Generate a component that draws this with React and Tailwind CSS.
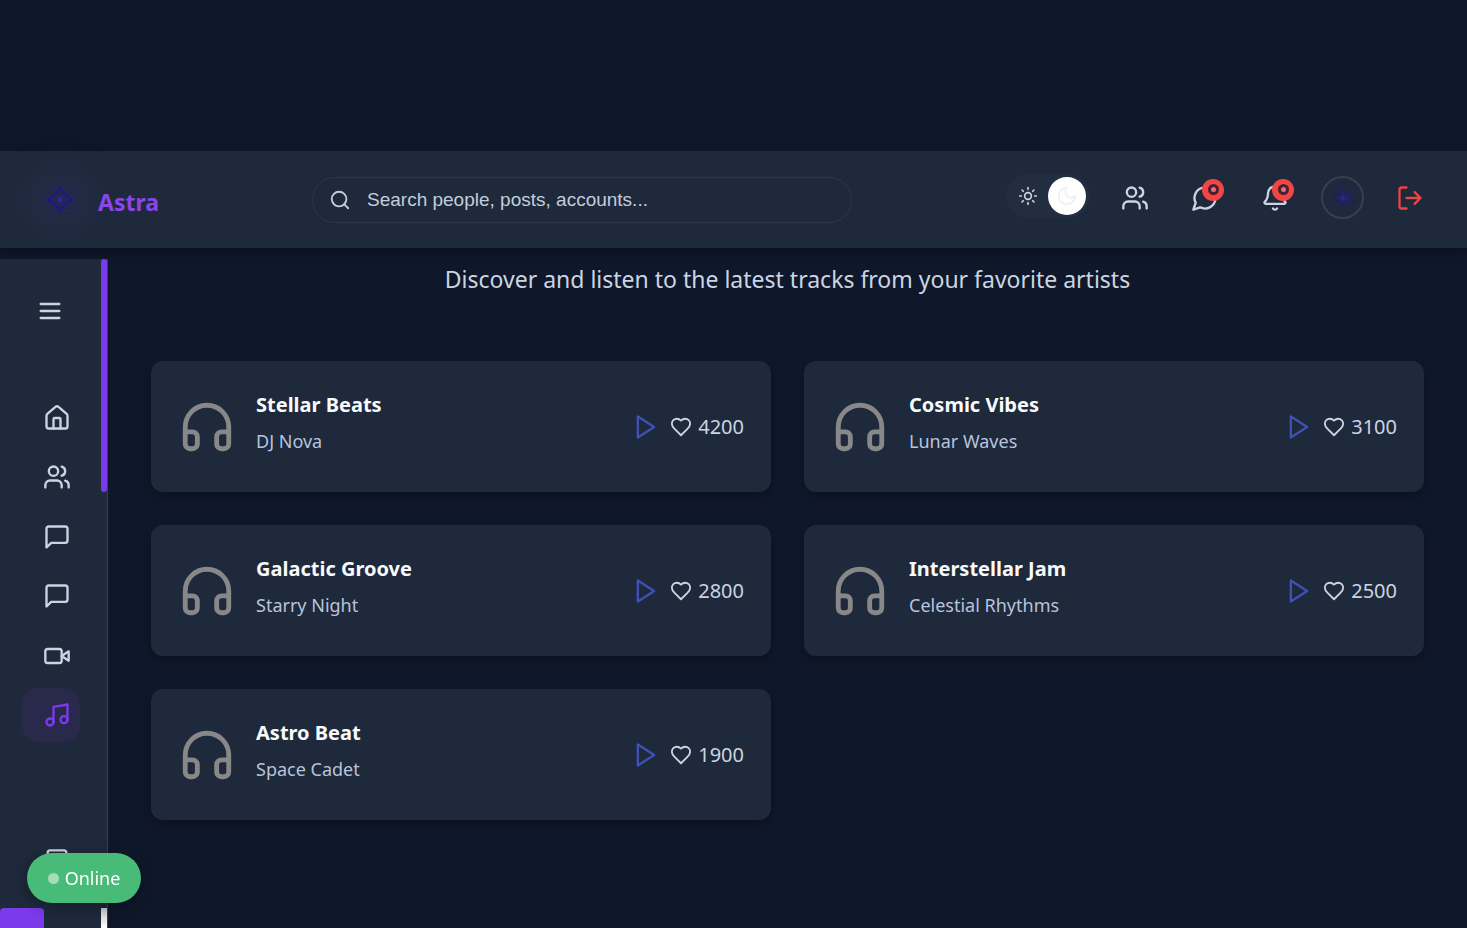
const stroke = {
  fill: 'none',
  stroke: 'currentColor',
  strokeWidth: 2,
  strokeLinecap: 'round',
  strokeLinejoin: 'round',
  viewBox: '0 0 24 24',
  'aria-hidden': true,
};

const paths = {
  menu: <path d="M4 6h16M4 12h16M4 18h16" />,
  home: (
    <>
      <path d="M15 21v-8a1 1 0 0 0-1-1h-4a1 1 0 0 0-1 1v8" />
      <path d="M3 10a2 2 0 0 1 .709-1.528l7-5.999a2 2 0 0 1 2.582 0l7 5.999A2 2 0 0 1 21 10v9a2 2 0 0 1-2 2H5a2 2 0 0 1-2-2z" />
    </>
  ),
  users: (
    <>
      <path d="M16 21v-2a4 4 0 0 0-4-4H6a4 4 0 0 0-4 4v2" />
      <circle cx="9" cy="7" r="4" />
      <path d="M22 21v-2a4 4 0 0 0-3-3.87M16 3.13a4 4 0 0 1 0 7.75" />
    </>
  ),
  message: <path d="M21 15a2 2 0 0 1-2 2H7l-4 4V5a2 2 0 0 1 2-2h14a2 2 0 0 1 2 2z" />,
  video: (
    <>
      <path d="m22 8-6 4 6 4V8Z" />
      <rect x="2" y="6" width="14" height="12" rx="2" />
    </>
  ),
  music: (
    <>
      <path d="M9 18V5l12-2v13" />
      <circle cx="6" cy="18" r="3" />
      <circle cx="18" cy="16" r="3" />
    </>
  ),
  file: <rect x="4" y="2" width="16" height="20" rx="2" />,
  headphones: (
    <path d="M3 14h3a2 2 0 0 1 2 2v3a2 2 0 0 1-2 2H5a2 2 0 0 1-2-2v-7a9 9 0 0 1 18 0v7a2 2 0 0 1-2 2h-1a2 2 0 0 1-2-2v-3a2 2 0 0 1 2-2h3" />
  ),
  play: <path d="m5 3 14 9-14 9z" />,
  heart: (
    <path d="M19 14c1.49-1.46 3-3.21 3-5.5A5.5 5.5 0 0 0 16.5 3c-1.76 0-3 .5-4.5 2-1.5-1.5-2.74-2-4.5-2A5.5 5.5 0 0 0 2 8.5c0 2.3 1.5 4.05 3 5.5l7 7Z" />
  ),
  chat: <path d="M7.9 20A9 9 0 1 0 4 16.1L2 22Z" />,
  bell: (
    <>
      <path d="M10.268 21a2 2 0 0 0 3.464 0" />
      <path d="M3.262 15.326A1 1 0 0 0 4 17h16a1 1 0 0 0 .74-1.673C19.41 13.956 18 12.499 18 8A6 6 0 0 0 6 8c0 4.499-1.411 5.956-2.738 7.326" />
    </>
  ),
  logout: (
    <path d="M9 21H5a2 2 0 0 1-2-2V5a2 2 0 0 1 2-2h4M16 17l5-5-5-5M21 12H9" />
  ),
  search: (
    <>
      <circle cx="11" cy="11" r="8" />
      <path d="m21 21-4.3-4.3" />
    </>
  ),
  sun: (
    <>
      <circle cx="12" cy="12" r="4" />
      <path d="M12 2v2M12 20v2m-7.07-17.07 1.41 1.41m11.32 11.32 1.41 1.41M2 12h2m16 0h2M6.34 17.66l-1.41 1.41M19.07 4.93l-1.41 1.41" />
    </>
  ),
  moon: <path d="M12 3a6 6 0 0 0 9 9 9 9 0 1 1-9-9Z" />,
};

function Icon({ name, className }) {
  return (
    <svg {...stroke} className={className}>
      {paths[name]}
    </svg>
  );
}

function Logo({ className }) {
  return (
    <svg viewBox="0 0 40 40" fill="none" className={className} aria-hidden="true">
      <g stroke="#1f1f5c" strokeWidth="0.8" opacity="0.6">
        <path d="M9 14V6h4V3M14 9V3h5M26 10V4h4V2M31 13V6h5M36 10v15l-4 4H24M1 32h8l8-8M1 28h6l6-6M12 34l6-6M25 33h7l3-3M22 7V2" />
      </g>
      <path
        d="M20 8c2.500 5 6.500 9 13 12-6.500 3-10.500 6-13 11-2.500-5-6.500-8-13-11 6.500-3 10.500-7 13-12Z"
        fill="#22294f"
        stroke="#22187c"
        strokeWidth="2.6"
        strokeLinejoin="round"
      />
      <path d="M20 16.500 23 20l-3 3-3-3Z" fill="#2d22a8" />
    </svg>
  );
}

function Badge() {
  return (
    <span className="absolute -right-[5px] -top-[5px] flex size-[22px] items-center justify-center rounded-full bg-[#f24646]">
      <span className="flex size-[11px] items-center justify-center rounded-full bg-[#4a1f2e]">
        <span className="size-[5px] rounded-full bg-[#e0717b]" />
      </span>
    </span>
  );
}

function TopBar() {
  return (
    <header className="relative flex h-[97px] items-center bg-[#1e293b] pr-[43px] shadow-[0_4px_10px_rgba(0,0,0,0.3)]">
      <div className="flex w-[312px] shrink-0 items-center pl-10">
        <span className="flex rounded-full bg-[#212b45] shadow-[0_0_32px_16px_rgba(50,58,110,0.2)]">
          <Logo className="size-10" />
        </span>
        <span className="pl-[18px] pt-1 text-[23px] leading-8 font-bold text-[#8b46e8]">Astra</span>
      </div>
      <div className="flex h-[46px] w-[540px] items-center gap-4 rounded-full border border-[#2b384c] pl-4 pr-6 text-[#c3cddb]">
        <Icon name="search" className="size-[22px] shrink-0" />
        <input
          type="search"
          aria-label="Search"
          placeholder="Search people, posts, accounts..."
          className="min-w-0 flex-1 bg-transparent font-['Liberation_Sans',sans-serif] text-[19px] leading-8 outline-none placeholder:text-[#c3cddb]"
        />
      </div>
      <div className="ml-auto flex items-center pb-1 text-[#cbd5e1]">
        <button type="button" role="switch" aria-checked="true" aria-label="Dark mode" className="mb-1 mr-[31px] flex h-11 w-[84px] items-center justify-between rounded-full bg-[#222d40] pl-3 pr-1">
          <Icon name="sun" className="size-5" />
          <span className="flex size-[38px] items-center justify-center rounded-full bg-white text-[#edf1f6]">
            <Icon name="moon" className="size-[22px]" />
          </span>
        </button>
        <button type="button" aria-label="Friends" className="mr-[42px] flex">
          <Icon name="users" className="size-7" />
        </button>
        <button type="button" aria-label="Messages" className="relative mr-[42px] flex">
          <Icon name="chat" className="size-7" />
          <Badge />
        </button>
        <button type="button" aria-label="Notifications" className="relative mr-8 flex">
          <Icon name="bell" className="size-7" />
          <Badge />
        </button>
        <button type="button" aria-label="Profile" className="mr-8 flex size-[43px] items-center justify-center rounded-full border-2 border-[#334155]">
          <Logo className="size-7" />
        </button>
        <button type="button" aria-label="Log out" className="flex text-[#ef4444]">
          <Icon name="logout" className="size-7" />
        </button>
      </div>
    </header>
  );
}

const nav = [
  { icon: 'home', label: 'Home' },
  { icon: 'users', label: 'Friends' },
  { icon: 'message', label: 'Messages' },
  { icon: 'message', label: 'Groups' },
  { icon: 'video', label: 'Videos' },
  { icon: 'music', label: 'Music', active: true },
];

function Sidebar() {
  return (
    <aside className="relative mt-[11px] flex w-[108px] shrink-0 flex-col overflow-hidden border-r border-[#334155] bg-[#1e293b] text-[#cbd5e1]">
      <button type="button" aria-label="Toggle menu" className="ml-9 mt-[38px] flex size-7">
        <Icon name="menu" className="size-7" />
      </button>
      <nav className="mt-[66px] flex h-[351px] flex-col justify-between pl-[22px]">
        {nav.map(({ icon, label, active }) => (
          <a
            key={label}
            href="#"
            aria-label={label}
            className={
              active
                ? 'flex h-[54px] w-[58px] items-center rounded-2xl bg-[#28294b] pl-[21px] text-[#7c3aed]'
                : 'flex h-[54px] w-[58px] items-center rounded-2xl pl-[21px]'
            }
          >
            <Icon name={icon} className="size-7" />
          </a>
        ))}
      </nav>
      <a href="#" aria-label="Pages" className="ml-[43px] mt-[106px] flex">
        <Icon name="file" className="size-7" />
      </a>
      <div className="absolute bottom-0 right-0 top-0 flex w-1.5 flex-col justify-between">
        <span className="h-[233px] rounded-full bg-[#7c3aed]" />
        <span className="h-5 bg-linear-to-b from-[#c9c9cc] to-white" />
      </div>
      <span className="absolute bottom-0 left-0 h-5 w-11 rounded-t bg-[#7c3aed]" />
    </aside>
  );
}

const tracks = [
  { title: 'Stellar Beats', artist: 'DJ Nova', likes: 4200 },
  { title: 'Cosmic Vibes', artist: 'Lunar Waves', likes: 3100 },
  { title: 'Galactic Groove', artist: 'Starry Night', likes: 2800 },
  { title: 'Interstellar Jam', artist: 'Celestial Rhythms', likes: 2500 },
  { title: 'Astro Beat', artist: 'Space Cadet', likes: 1900 },
];

function Track({ title, artist, likes }) {
  return (
    <article className="flex h-[131px] items-center rounded-xl bg-[#1e293b] px-[27px] shadow-[0_4px_8px_rgba(0,0,0,0.25)]">
      <Icon name="headphones" className="size-[58px] shrink-0 text-[#888888]" />
      <div className="min-w-0 flex-1 pb-2 pl-5">
        <h2 className="text-xl leading-8 font-bold text-[#f8fafc]">{title}</h2>
        <p className="pt-1 text-lg leading-8 text-[#b8c3dc]">{artist}</p>
      </div>
      <div className="flex items-center text-[#cbd5e1]">
        <button type="button" aria-label={`Play ${title}`} className="mr-2.5 flex text-[#3f51b5]">
          <Icon name="play" className="size-7" />
        </button>
        <button type="button" aria-label={`Like ${title}`} className="mr-1.5 flex">
          <Icon name="heart" className="size-[22px]" />
        </button>
        <span className="text-xl leading-8">{likes}</span>
      </div>
    </article>
  );
}

export default function App() {
  return (
    <div className="flex min-h-screen flex-col bg-[#0f172a] pt-[151px] font-['Noto_Sans','Open_Sans',sans-serif]">
      <TopBar />
      <div className="flex flex-1">
        <Sidebar />
        <main className="flex-1 px-[43px] pt-[13px]">
          <p className="text-center text-[23px] leading-9 text-[#cbd5e1]">
            Discover and listen to the latest tracks from your favorite artists
          </p>
          <div className="mt-16 grid grid-cols-2 gap-[33px]">
            {tracks.map((track) => (
              <Track key={track.title} {...track} />
            ))}
          </div>
        </main>
      </div>
      <div role="status" className="fixed bottom-[25px] left-[27px] flex h-[50px] w-[114px] items-center justify-center gap-1.5 rounded-full bg-[#48bb78] text-lg text-white shadow-[0_4px_16px_rgba(0,0,0,0.3)]">
        <span className="size-[11px] rounded-full bg-[#a4ddbb]" />
        Online
      </div>
    </div>
  );
}
